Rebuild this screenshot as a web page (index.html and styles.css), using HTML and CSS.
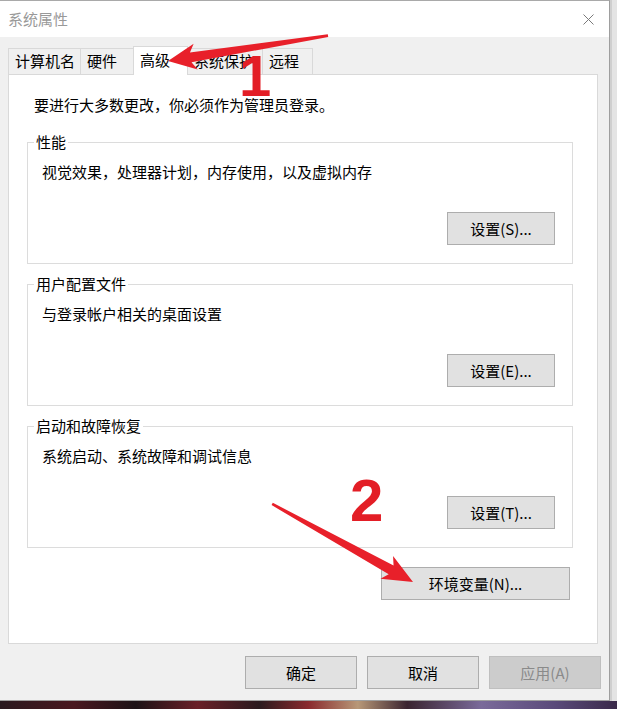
FILE: index.html
```html
<!DOCTYPE html>
<html lang="zh-CN">
<head>
<meta charset="utf-8">
<title>系统属性</title>
<link rel="stylesheet" href="styles.css">
</head>
<body>
<div class="screen">
  <div class="desk">
    <div class="window">
      <div class="titlebar">
        <span class="title">系统属性</span>
        <svg class="close" width="11" height="11" viewBox="0 0 11 11"><path d="M0.5 0.5 L10.5 10.5 M10.5 0.5 L0.5 10.5" stroke="#7a7a7a" stroke-width="1" fill="none"/></svg>
      </div>
      <div class="client">
        <div class="tabs">
          <div class="tab t1">计算机名</div>
          <div class="tab t2">硬件</div>
          <div class="tab t3 active">高级</div>
          <div class="tab t4">系统保护</div>
          <div class="tab t5">远程</div>
        </div>
        <div class="panel">
          <div class="intro">要进行大多数更改，你必须作为管理员登录。</div>
          <div class="group first">
            <div class="legend">性能</div>
            <div class="desc">视觉效果，处理器计划，内存使用，以及虚拟内存</div>
            <button class="btn btn-group">设置(S)...</button>
          </div>
          <div class="group">
            <div class="legend">用户配置文件</div>
            <div class="desc">与登录帐户相关的桌面设置</div>
            <button class="btn btn-group">设置(E)...</button>
          </div>
          <div class="group">
            <div class="legend">启动和故障恢复</div>
            <div class="desc">系统启动、系统故障和调试信息</div>
            <button class="btn btn-group">设置(T)...</button>
          </div>
          <button class="btn btn-env">环境变量(N)...</button>
        </div>
        <div class="actions">
          <button class="btn btn-action">确定</button>
          <button class="btn btn-action">取消</button>
          <button class="btn btn-action disabled">应用(A)</button>
        </div>
      </div>
    </div>
    <div class="side"></div>
  </div>
  <div class="strip"></div>
  <svg class="marks" width="617" height="709" viewBox="0 0 617 709">
    <g transform="translate(168 61) rotate(171)">
      <polygon points="0,0 -28,-13 -23,-5 -162,-1.3 -162,1.3 -23,5 -28,13" fill="#e8202a"/>
    </g>
    <g transform="translate(413 582) rotate(29)">
      <polygon points="0,0 -30,-13 -25,-5 -161,-1.3 -161,1.3 -25,5 -30,13" fill="#e8202a"/>
    </g>
    <text class="num" x="239" y="96" font-size="58">1</text>
    <text class="num" x="350" y="521" font-size="60">2</text>
  </svg>
</div>
</body>
</html>
```

FILE: styles.css
```css
html, body {
  margin: 0;
  padding: 0;
}

body {
  font-family: "Noto Sans CJK SC", "Microsoft YaHei", sans-serif;
  font-size: 15px;
  color: #000;
  background: #e6e6e6;
}

.screen {
  position: relative;
  width: 617px;
  height: 709px;
  display: flex;
  flex-direction: column;
  overflow: hidden;
}

.desk {
  display: flex;
  height: 701px;
}

.window {
  width: 610px;
  height: 701px;
  box-sizing: border-box;
  border-top: 1px solid #a9a9a9;
  border-right: 1px solid #9e9e9e;
  border-bottom: 1px solid #9e9e9e;
  display: flex;
  flex-direction: column;
  background: #f0f0f0;
}

.side {
  flex: 1;
  background: #e4e4e4;
  box-shadow: inset 2px 0 0 #cfcfcf;
}

.strip {
  height: 8px;
  background: linear-gradient(90deg, #2a1a20 0%, #4a1820 12%, #1c1216 22%, #6a2028 32%, #2a1a1e 42%, #8a2a2e 50%, #b89878 58%, #3a2430 66%, #7a6a9a 78%, #5a4a7a 90%, #3a2a4a 100%);
}

.titlebar {
  height: 36px;
  background: #fff;
  display: flex;
  align-items: center;
  justify-content: space-between;
  padding: 0 15px 0 8px;
}

.title {
  color: #999;
  line-height: 20px;
  font-size: 15px;
}

.close {
  display: block;
}

.client {
  flex: 1;
  display: flex;
  flex-direction: column;
}

.tabs {
  display: flex;
  align-items: flex-end;
  padding: 11px 0 0 8px;
  height: 26px;
}

.tab {
  height: 26px;
  box-sizing: border-box;
  border: 1px solid #d9d9d9;
  border-bottom: none;
  margin-left: -1px;
  padding-left: 6px;
  line-height: 24px;
  background: #f0f0f0;
  white-space: nowrap;
}

.tab.t1 { margin-left: 0; width: 73px; }
.tab.t2 { width: 54px; }
.tab.t3 { width: 55px; }
.tab.t4 { width: 76px; }
.tab.t5 { width: 51px; }

.tab.active {
  background: #fff;
  height: 29px;
  margin-top: -2px;
  margin-bottom: -1px;
  line-height: 26px;
  position: relative;
  z-index: 1;
}

.panel {
  position: relative;
  width: 590px;
  height: 570px;
  box-sizing: border-box;
  margin-left: 8px;
  background: #fff;
  border: 1px solid #d9d9d9;
  padding-top: 20px;
  display: flex;
  flex-direction: column;
  align-items: flex-start;
}

.intro {
  padding-left: 25px;
  line-height: 20px;
}

.group {
  width: 546px;
  height: 122px;
  box-sizing: border-box;
  border: 1px solid #dcdcdc;
  margin: 20px 0 0 18px;
  display: flex;
  flex-direction: column;
  align-items: flex-start;
}

.group.first {
  margin-top: 27px;
}

.legend {
  margin: -11px 0 0 6px;
  padding: 0 2px;
  background: #fff;
  line-height: 20px;
}

.desc {
  margin: 10px 0 0 14px;
  line-height: 20px;
}

.btn {
  font-family: "Noto Sans CJK SC", "Microsoft YaHei", sans-serif;
  font-size: 15px;
  color: #000;
  background: #e1e1e1;
  border: 1px solid #adadad;
  border-radius: 0;
  height: 33px;
  box-sizing: border-box;
  padding: 0;
  line-height: 20px;
}

.btn-group {
  width: 108px;
  align-self: flex-end;
  margin: auto 17px 18px 0;
}

.btn-env {
  width: 189px;
  align-self: flex-end;
  margin: 19px 27px 0 0;
}

.actions {
  display: flex;
  justify-content: flex-end;
  gap: 10px;
  margin-top: 12px;
  padding-right: 8px;
}

.btn-action {
  width: 112px;
}

.btn.disabled {
  background: #cccccc;
  border-color: #bfbfbf;
  color: #8a8a8a;
}

.marks {
  position: absolute;
  left: 0;
  top: 0;
  z-index: 5;
  pointer-events: none;
}

.num {
  font-family: "Liberation Sans", Arial, sans-serif;
  font-weight: bold;
  fill: #e31e26;
}
```
